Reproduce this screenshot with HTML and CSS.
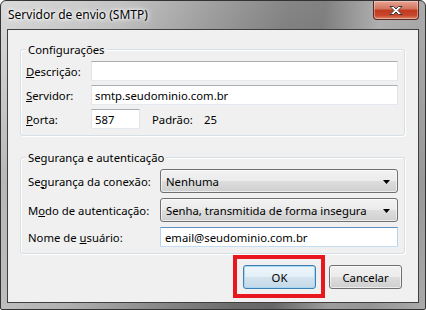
FILE: index.html
```html
<!DOCTYPE html>
<html>

<head>
    <meta charset="utf-8">
    <title>Servidor de envio (SMTP)</title>
    <link rel="stylesheet" href="styles.css">
</head>

<body>
    <div class="window">
        <div class="titlebar">
            <span class="title">Servidor de envio (SMTP)</span>
            <div class="close">
                <svg width="16" height="11" viewBox="0 0 16 11">
                    <path d="M2 1.5 L5.5 1.5 L8 4 L10.5 1.5 L14 1.5 L10 5.5 L14 9.5 L10.5 9.5 L8 7 L5.5 9.5 L2 9.5 L6 5.5 Z" fill="#fff" stroke="#3b3b3b" stroke-width="1" stroke-linejoin="round"/>
                </svg>
            </div>
        </div>
        <div class="client">
            <!-- configuracoes -->
            <fieldset class="group group-config">
                <legend>Configurações</legend>
                <div class="row">
                    <label class="lbl"><u>D</u>escrição:</label>
                    <input class="text" type="text" value="">
                </div>
                <div class="row">
                    <label class="lbl"><u>S</u>ervidor:</label>
                    <input class="text" type="text" value="smtp.seudominio.com.br">
                </div>
                <div class="row">
                    <label class="lbl"><u>P</u>orta:</label>
                    <input class="text port" type="text" value="587">
                    <span class="default-lbl">Padrão:</span>
                    <span>25</span>
                </div>
            </fieldset>
            <!-- seguranca -->
            <fieldset class="group group-security">
                <legend>Segurança e autenticação</legend>
                <div class="row">
                    <label class="lbl">Se<u>g</u>urança da conexão:</label>
                    <div class="combo">
                        <span>Nenhuma</span>
                        <svg class="arrow" width="7" height="4" viewBox="0 0 7 4"><polygon points="0,0 7,0 3.5,4" fill="#000"/></svg>
                    </div>
                </div>
                <div class="row">
                    <label class="lbl">M<u>o</u>do de autenticação:</label>
                    <div class="combo">
                        <span>Senha, transmitida de forma insegura</span>
                        <svg class="arrow" width="7" height="4" viewBox="0 0 7 4"><polygon points="0,0 7,0 3.5,4" fill="#000"/></svg>
                    </div>
                </div>
                <div class="row">
                    <label class="lbl">Nome de <u>u</u>suário:</label>
                    <input class="text user" type="text" value="email@seudominio.com.br">
                </div>
            </fieldset>
            <div class="buttons">
                <div class="mark">
                    <button class="btn btn-default">OK</button>
                </div>
                <button class="btn">Cancelar</button>
            </div>
        </div>
    </div>
</body>

</html>
```

FILE: styles.css
```css
*{
    padding: 0;
    margin: 0;
    box-sizing: border-box;
}
html,body{
    width: 100%;
    height: 100%;
}
body{
    font-family: "Noto Sans", "Open Sans", sans-serif;
    font-size: 11.3px;
    color: #000;
    background: #fff;
}
.window{
    width: 426px;
    height: 310px;
    display: flex;
    flex-direction: column;
    padding: 0 6px 6px;
    border: 1px solid #333;
    border-radius: 6px 6px 2px 2px;
    background:
        linear-gradient(to bottom, rgba(255,255,255,0.15), rgba(0,0,0,0.1) 60%, rgba(0,0,0,0.05)),
        linear-gradient(100deg, #d4d4d4 0%, #bababa 25%, #8e8e8e 45%, #717171 60%, #6c6c6c 68%, #a6a6a6 80%, #9c9c9c 88%, #b4b4b4 100%);
}
.titlebar{
    height: 28px;
    display: flex;
    align-items: flex-start;
    justify-content: space-between;
}
.title{
    font-size: 12px;
    line-height: 27px;
    padding-left: 1px;
    text-shadow: 0 0 6px #fff, 0 0 4px #fff, 0 0 2px rgba(255,255,255,0.8);
}
.close{
    width: 46px;
    height: 19px;
    display: flex;
    align-items: center;
    justify-content: center;
    border: 1px solid #5c2a24;
    border-top: none;
    border-radius: 0 0 4px 4px;
    background: linear-gradient(to bottom, #e8a493 0%, #d2735d 45%, #c1391f 50%, #c8472c 80%, #dc8a6c 100%);
    box-shadow: inset 0 0 0 1px rgba(255,255,255,0.35);
}
.client{
    flex: 1;
    display: flex;
    flex-direction: column;
    padding: 12px 13px 0 12px;
    border: 1px solid #3f3f3f;
    background: #f0f0f0;
}
.group{
    border: 1px solid #d5dfe5;
    border-radius: 3px;
    box-shadow: inset 1px 1px 0 #fff, 1px 1px 0 #fff;
    padding: 4px 6px 6px 5px;
    display: flex;
    flex-direction: column;
}
.group legend{
    line-height: 15px;
    padding: 0 2px;
    background: #f0f0f0;
}
.group-config .row{
    margin-bottom: 4px;
}
.group-security{
    margin-top: 14px;
    padding-left: 7px;
}
.group-security legend{
    margin-left: -2px;
}
.group-security .row{
    margin-bottom: 5px;
}
.group .row:last-child{
    margin-bottom: 0;
}
.row{
    display: flex;
    align-items: center;
}
.lbl{
    flex: none;
    width: 65px;
}
.group-security .lbl{
    width: 132px;
}
.text{
    flex: 1;
    height: 20px;
    padding: 0 3px;
    font: inherit;
    color: #000;
    background: #fff;
    border: 1px solid;
    border-color: #abadb3 #e2e3ea #e3e9ef #e2e3ea;
    outline: none;
}
.text.port{
    flex: none;
    width: 49px;
}
.text.user{
    padding-left: 4px;
    border-color: #5d92c7 #b7d4ee #c2dcf2 #b7d4ee;
}
.default-lbl{
    margin-left: 12px;
    width: 52px;
}
.combo{
    flex: 1;
    height: 24px;
    display: flex;
    align-items: center;
    justify-content: space-between;
    padding: 0 7px 0 5px;
    border: 1px solid #707070;
    border-radius: 3px;
    background: linear-gradient(to bottom, #f2f2f2 0%, #ebebeb 50%, #dddddd 51%, #cfcfcf 100%);
    box-shadow: inset 0 0 0 1px rgba(255,255,255,0.6);
}
.combo .arrow{
    margin-top: 1px;
}
.buttons{
    display: flex;
    justify-content: flex-end;
    gap: 13px;
    margin-top: 11px;
    padding-right: 3px;
}
.btn{
    width: 73px;
    height: 24px;
    font: inherit;
    color: #000;
    border: 1px solid #707070;
    border-radius: 3px;
    background: linear-gradient(to bottom, #f2f2f2 0%, #ebebeb 50%, #dddddd 51%, #cfcfcf 100%);
    box-shadow: inset 0 0 0 1px rgba(255,255,255,0.6);
}
.btn-default{
    border-color: #3c7fb1;
    background: linear-gradient(to bottom, #eef6fb 0%, #e2eef6 50%, #d3e3ee 51%, #c6d9e8 100%);
    box-shadow: inset 0 0 0 1px #a9d6f3;
}
.mark{
    position: relative;
    display: flex;
}
.mark::after{
    content: "";
    position: absolute;
    top: -10px;
    left: -10px;
    right: -9px;
    bottom: -9px;
    border: 4px solid #e8161e;
    pointer-events: none;
}
```
